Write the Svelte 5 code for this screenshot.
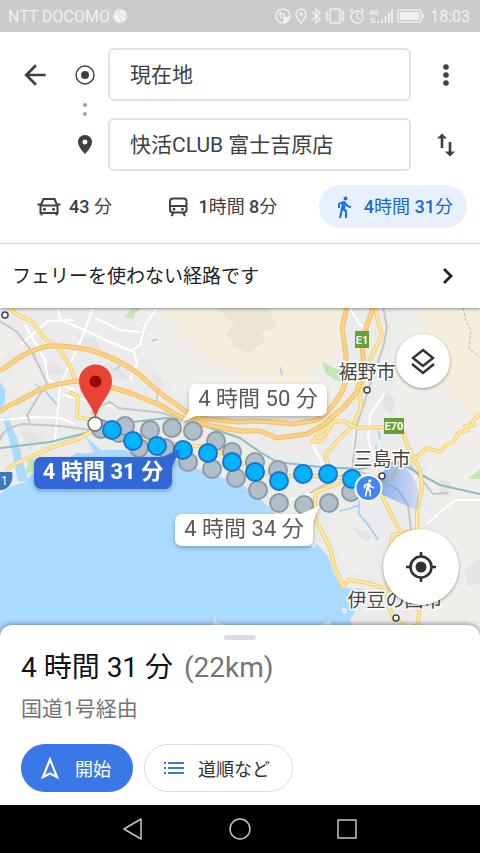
<script>
	let origin = '現在地';
	let destination = '快活CLUB 富士吉原店';
	let mode = 'walk';

	const modes = [
		{ id: 'car', label: '車', time: '43 分' },
		{ id: 'transit', label: '公共交通機関', time: '1時間 8分' },
		{ id: 'walk', label: '徒歩', time: '4時間 31分' }
	];

	// alternative routes
	const alternatives = [
		[101, 429], [119, 433], [125, 426], [139, 448], [150, 430], [165, 448], [172, 428], [193, 431],
		[216, 441], [232, 452], [255, 462], [278, 470], [188, 462], [212, 469], [236, 478], [258, 490],
		[279, 503], [304, 505], [329, 503], [351, 492]
	];

	// selected route
	const route = [
		[112, 430], [133, 441], [157, 446], [183, 450], [208, 453], [232, 462],
		[255, 472], [279, 481], [303, 474], [328, 474], [352, 479]
	];

	const highways = [
		'M0 371 L20 357 Q38 347 50 346 T90 350 Q120 359 140 375 L160 393 L180 407 Q190 417 207 419 L240 422 L253 421 L273 422 L293 424 L317 420 Q328 413 333 405 Q344 392 345 382 L346 355 L342 328 L347 306',
		'M0 412 Q8 405 17 402 L37 391 Q55 383 80 381 L110 387 L133 394 L160 405 L180 417 L207 425 L240 431 L260 431 L277 438 L307 434 L323 425 L343 408 L357 392 L364 368 L362 342 L367 325 L374 306'
	];

	const roads = [
		'M8 306 L16 314 L33 322 L43 337 L60 350 L70 366 L75 380',
		'M70 392 L78 397 L77 417 L93 420',
		'M5 472 L13 465 L50 448 L80 438 L93 431 L130 436 L180 445 L210 447 L235 460 L278 478 L300 475 L352 479',
		'M375 306 L378 322 L382 335 L372 355 L363 378 L360 395 L361 408 L353 425 L340 438 L325 455 L330 470',
		'M330 425 L317 436 L312 442 L322 441 L333 422 L343 421 L357 428 L383 427 L403 432 L410 452 L420 470 L422 488 L417 512 L417 530 L393 535 L388 555 L387 602 L395 622',
		'M480 414 L472 422 L474 425 L465 426 L468 430 L458 433 L454 442 L446 445 L440 452 L427 448 L413 460 L400 466 L384 487',
		'M352 479 L315 492 L315 518 L330 548 L335 568 L343 587 L348 580 L368 583 L383 588',
		'M375 478 L383 498 L393 518 L403 535',
		'M420 600 L418 625 L408 628 L398 620'
	];

	const streets = [
		'M93 308 L85 330 L78 347 L60 385 L55 440',
		'M25 325 L45 360 L48 380 L75 390',
		'M58 308 L60 320 L84 330 L110 342 L134 352 L137 363 L130 380',
		'M157 308 L145 325 L140 345 L133 350',
		'M0 420 L35 417 L60 418 L75 424',
		'M62 395 L85 400 L120 408',
		'M20 345 L48 321 L74 320',
		'M95 318 L120 330 L140 332',
		'M312 442 L318 455 L326 470',
		'M385 393 L370 415 L368 440 L375 460',
		'M480 500 L455 500 L440 512 L427 524',
		'M350 308 L358 322 L367 332',
		'M290 500 L340 485 L365 472',
		'M355 425 L353 460 L350 470'
	];

	const callouts = [
		{ x: 189, y: 384, text: '4 時間 50 分', tail: 'M191 408 L182 422 L204 412Z' },
		{ x: 175, y: 514, text: '4 時間 34 分', tail: 'M296 516 L319 506 L311 528Z' },
		{ x: 34, y: 457, text: '4 時間 31 分', tail: 'M156 460 L180 449 L170 472Z', active: true }
	];

	// '4時間 31分' -> ['', '4', '時間 ', '31', '分'], digits at odd places
	const parts = (time) => time.split(/(\d+)/);
</script>

<div class="screen">
	<div class="status">
		<span>NTT DOCOMO</span>
		<svg class="ball" width="14" height="14" viewBox="0 0 14 14">
			<circle cx="7" cy="7" r="7" fill="currentColor" />
			<path d="M1 4 Q7 4 8 13 M5 1 Q7 7 14 8" fill="none" stroke="#cbcbcb" stroke-dasharray="2 1" />
		</svg>
		<div class="status-icons">
			<svg width="16" height="16" viewBox="0 0 16 16">
				<circle cx="8" cy="8" r="7" />
				<path d="M6 11V5L4 7M9 5v6l2-2" />
				<path d="M9 14Q9 10 14 9Q14 14 9 14Z" fill="currentColor" />
			</svg>
			<svg width="12" height="16" viewBox="0 0 12 16">
				<path d="M6 15C3 11 1 9 1 6a5 5 0 0 1 10 0C11 9 9 11 6 15Z" />
				<circle cx="6" cy="6" r="1" fill="currentColor" />
			</svg>
			<svg width="10" height="16" viewBox="0 0 10 16">
				<path d="M1 4l8 7-4 4V1l4 4-8 7" />
			</svg>
			<svg width="20" height="16" viewBox="0 0 20 16">
				<rect x="5" y="1" width="10" height="14" rx="1" />
				<path d="M3 3L1 5l2 2-2 2 2 2-2 2M17 3l2 2-2 2 2 2-2 2 2 2" />
			</svg>
			<svg width="16" height="16" viewBox="0 0 16 16">
				<circle cx="8" cy="9" r="6" />
				<path d="M8 5v4l3 2M1 4l3-3M15 4l-3-3" />
			</svg>
			<svg class="signal" width="24" height="16" viewBox="0 0 24 16">
				<text x="0" y="7">4G</text>
				<path d="M3 15v-5l-2 2M5 10v5l2-2" stroke-width="1" />
				<path d="M9.500 15v-2M13 15v-4M16.500 15V8M20 15V5M23 15V1" stroke-width="1.800" />
			</svg>
			<svg width="28" height="14" viewBox="0 0 28 14">
				<rect x="1" y="1" width="23" height="12" rx="1" />
				<rect x="3" y="3" width="19" height="8" fill="currentColor" stroke="none" />
				<path d="M26 5v4" stroke-width="2" />
			</svg>
		</div>
		<span class="clock">18:03</span>
	</div>

	<header>
		<div class="fields">
			<button aria-label="戻る">
				<svg width="32" height="32" viewBox="0 0 24 24">
					<path d="M20 11H7.8l5.6-5.6L12 4l-8 8 8 8 1.4-1.4L7.8 13H20z" fill="currentColor" />
				</svg>
			</button>
			<svg width="20" height="20" viewBox="0 0 20 20">
				<circle cx="10" cy="10" r="9" fill="none" stroke="currentColor" stroke-width="1.4" />
				<circle cx="10" cy="10" r="4" fill="currentColor" />
			</svg>
			<input type="text" aria-label="出発地" bind:value={origin} />
			<button aria-label="その他">
				<svg width="24" height="24" viewBox="0 0 24 24" fill="currentColor">
					<circle cx="12" cy="4" r="2.8" />
					<circle cx="12" cy="12" r="2.8" />
					<circle cx="12" cy="20" r="2.8" />
				</svg>
			</button>

			<svg class="dots" width="6" height="16" viewBox="0 0 6 16">
				<circle cx="3" cy="3" r="2" />
				<circle cx="3" cy="12" r="2" />
			</svg>

			<svg class="place" width="24" height="24" viewBox="0 0 24 24">
				<path
					fill-rule="evenodd"
					d="M12 2C8.13 2 5 5.13 5 9c0 5.25 7 12 7 12s7-6.75 7-12c0-3.87-3.13-7-7-7zm0 9.500a2.500 2.500 0 1 1 0-5 2.500 2.500 0 0 1 0 5z"
					fill="currentColor"
				/>
			</svg>
			<input type="text" aria-label="目的地" bind:value={destination} />
			<button aria-label="出発地と目的地を入れ替える">
				<svg width="24" height="24" viewBox="0 0 24 24">
					<path d="M8 15V3M16 9v12" fill="none" stroke="currentColor" stroke-width="2.6" />
					<path d="M3 5.500L8 .500l5 5zM11 18.500l5 5 5-5z" fill="currentColor" />
				</svg>
			</button>
		</div>

		<nav class="modes" aria-label="移動手段">
			{#each modes as m}
				<button
					class="mode"
					class:selected={mode === m.id}
					aria-label="{m.label} {m.time}"
					aria-pressed={mode === m.id}
					on:click={() => (mode = m.id)}
				>
					<svg width="24" height="24" viewBox="0 0 24 24">
						{#if m.id === 'car'}
							<path
								d="M3.500 19V11l3-7h11l3 7v8M3.500 10.500h17M3.500 18h17M.500 9.500h3M20.500 9.500h3M4.500 17.500v3M19.500 17.500v3"
								fill="none"
								stroke="currentColor"
								stroke-width="2"
							/>
							<circle cx="7.500" cy="14.200" r="1.500" fill="currentColor" />
							<circle cx="16.500" cy="14.200" r="1.500" fill="currentColor" />
						{:else if m.id === 'transit'}
							<rect x="4" y="3.500" width="16.500" height="14" rx="3" fill="none" stroke="currentColor" stroke-width="2" />
							<path d="M4 11h16M7.500 17.500l-2 3.500M17 17.500l2 3.500" fill="none" stroke="currentColor" stroke-width="2" />
							<circle cx="8" cy="14.200" r="1.400" fill="currentColor" />
							<circle cx="16.500" cy="14.200" r="1.400" fill="currentColor" />
						{:else}
							<path
								d="M13.500 5.500c1.100 0 2-.9 2-2s-.9-2-2-2-2 .9-2 2 .9 2 2 2zM9.800 8.900L7 23h2.100l1.800-8 2.100 2v6h2v-7.500l-2.100-2 .6-3C14.800 12 16.800 13 19 13v-2c-1.900 0-3.500-1-4.300-2.400l-1-1.600c-.4-.6-1-1-1.700-1-.3 0-.5.1-.8.1L6 8.300V13h2V9.600l1.800-.7"
								fill="currentColor"
							/>
						{/if}
					</svg>
					<span class="time">{#each parts(m.time) as part, i}{#if i % 2}<b>{part}</b>{:else}{part}{/if}{/each}</span>
				</button>
			{/each}
		</nav>
	</header>

	<button class="notice">
		<span>フェリーを使わない経路です</span>
		<svg width="16" height="20" viewBox="0 0 16 20">
			<path d="M4 3l7 7-7 7" fill="none" stroke="currentColor" stroke-width="2.8" />
		</svg>
	</button>

	<main>
		<svg class="map" viewBox="0 308 480 331" preserveAspectRatio="xMidYMid slice">
			<defs>
				<linearGradient id="beam" x1="0" y1="0" x2="1" y2="0">
					<stop offset="0" stop-color="#4285f4" stop-opacity=".7" />
					<stop offset="1" stop-color="#4285f4" stop-opacity=".15" />
				</linearGradient>
				<filter id="shadow" x="-10%" y="-20%" width="120%" height="160%">
					<feDropShadow dx="0" dy="2" stdDeviation="2" flood-opacity=".28" />
				</filter>
			</defs>

			<rect y="300" width="480" height="350" fill="#ebebec" />

			<!-- hills -->
			<path class="plain" d="M130 308L148 330 142 352 162 377 190 408 240 418 300 420 333 400 345 350 340 308Z" />
			<path class="plain" d="M0 325L15 337 22 345 0 358ZM0 385L30 360 43 380 20 395ZM395 308L480 308 480 639 400 639 440 560 430 500 425 450 398 420 390 350ZM340 500L372 530 380 577 347 570 328 530Z" />
			<path class="hill" d="M161 312L181 307 345 307 334 326 341 344 327 350 330 358 315 365 308 384 288 388 270 377 248 380 235 371 205 360 196 342 176 337 185 327Z" />
			<path class="hill" d="M418 308L480 308 480 414 460 406 450 390 430 386 420 365 426 340Z" />
			<path class="peak" d="M216 308L269 308 277 328 260 332 266 341 248 353 234 346 226 334 234 323Z" />
			<path class="shade" d="M75 332l22 8 6 15-17-5zM50 358l15 14-22 4zM100 365l19 1 11 15-22-3zM147 370l15 9-2 12zM384 390l12 9-4 15-9-5zM465 570l15-12v25l-13 4zM410 548l21 14-7 20-13-8zM349 526l24 8-6 8zM438 478l13 4-2 15-9-3zM20 430l25 5-16 16z" />
			<path class="wood" d="M124 317l8-9h8l-6 7v4zM322 362l14 7 6 1 5 14-12-4-9-6zM468 479l12-10v10zM29 459l5-1v13l-9 3z" />

			<!-- sea and rivers -->
			<path
				class="sea"
				d="M0 494L10 487 25 482 32 474 56 468 76 453 90 453 100 450 125 450 160 456 188 464 207 473 240 483 260 499 278 516 300 538 313 548 317 544 328 556 334 574 342 588 365 589 352 598 350 607 355 612 350 620 360 639 0 639Z"
			/>
			<path class="sea" d="M0 382L5 390 5 402 0 410ZM3 418L8 417 17 438 28 480 18 482 12 450ZM85 436l17 15-7 3zM345 307h10l-7 3z" />
			<path class="river" d="M35 384l12 9 11 13M114 370l10-7M152 341l6-2M359 500v14l10 12 9 14M339 511l10-2 10-4M380 439l-2-10M376 445l1 15M280 367l2 8M157 395v10" />
			<path class="isle" d="M212 625l4-10-1 7 14 4v8zM342 607l5 2-1 5-4-2zM320 625l9-4 3 4z" />

			{#each streets as d}
				<path class="street" {d} />
			{/each}

			<path class="rail" d="M0 321L17 332 32 352 47 383 27 415 30 423M0 440Q2 428 23 424L60 426 90 430M92 415L93 409 110 402 118 408 163 413 187 422M383 306L387 328 383 348 370 385 357 425 352 470 310 493M352 470L375 476 398 490 408 505 411 530M397 462L410 465 433 494 448 493" />
			<path class="boundary" d="M463 308l3 13 5 10-2 18 11 8" />
			<path class="train" d="M0 448L50 442 90 432 133 422 167 418 187 420 240 438 260 452 277 462 320 467 360 469 397 462 407 467 440 485 480 494" />

			{#each roads as d}
				<path class="road-edge" {d} />
				<path class="road" {d} />
			{/each}
			{#each highways as d}
				<path class="highway-edge" {d} />
				<path class="highway" {d} />
			{/each}

			<!-- road shields -->
			<g class="shield">
				<rect x="355" y="331" width="14" height="17" />
				<text x="362" y="344">E1</text>
				<rect x="384" y="418" width="20" height="16" />
				<text x="394" y="430">E70</text>
			</g>
			<path d="M-4 472h16q2 9-4 15-4 4-8 3z" fill="#3d78c4" />
			<text x="1" y="485" class="route-number">1</text>

			<path d="M368 488L395 459Q424 478 418 511Z" fill="url(#beam)" />

			<g class="town">
				<circle cx="5" cy="315" r="3" />
				<circle cx="367" cy="390" r="3" />
				<circle cx="382" cy="476" r="3" />
				<circle cx="396" cy="618" r="3" />
				<text x="367" y="379">裾野市</text>
				<text x="382" y="466">三島市</text>
				<text x="395" y="607">伊豆の国市</text>
			</g>

			{#each alternatives as [cx, cy]}
				<circle class="alternative" {cx} {cy} r="9" />
			{/each}
			{#each route as [cx, cy]}
				<circle class="route" {cx} {cy} r="9" />
			{/each}

			<circle cx="95" cy="424" r="7" fill="#fff" stroke="#666" stroke-width="1.500" />
			<path d="M95.500 420C94 405 79 395 79 381a16.500 16.500 0 0 1 33 0C112 395 97 405 95.500 420Z" fill="#ea4335" />
			<circle cx="95.500" cy="381.500" r="6" fill="#960a0a" />

			<circle cx="368.500" cy="488" r="13" fill="#4285f4" stroke="#fff" stroke-width="2" />
			<path
				transform="translate(359 478) scale(.8)"
				d="M13.500 5.500c1.100 0 2-.9 2-2s-.9-2-2-2-2 .9-2 2 .9 2 2 2zM9.800 8.900L7 23h2.100l1.800-8 2.100 2v6h2v-7.500l-2.100-2 .6-3C14.800 12 16.800 13 19 13v-2c-1.900 0-3.500-1-4.300-2.400l-1-1.600c-.4-.6-1-1-1.700-1-.3 0-.5.1-.8.1L6 8.300V13h2V9.600l1.800-.7"
				fill="#fff"
			/>

			{#each callouts as c}
				<g class="callout" class:active={c.active} filter="url(#shadow)">
					<rect x={c.x} y={c.y} width="138" height="32" rx="7" />
					<path d={c.tail} />
					<text x={c.x + 69} y={c.y + 22}>{c.text}</text>
				</g>
			{/each}
		</svg>

		<button class="round layers" aria-label="レイヤ">
			<svg width="28" height="28" viewBox="0 0 28 28" fill="none" stroke="currentColor" stroke-width="2.400">
				<path d="M14 3l10 8-10 8-10-8zM3 17l11 9 11-9" />
			</svg>
		</button>
		<button class="round locate" aria-label="現在地を表示">
			<svg width="32" height="32" viewBox="0 0 32 32">
				<circle cx="16" cy="16" r="10.500" fill="none" stroke="currentColor" stroke-width="2.600" />
				<circle cx="16" cy="16" r="5.500" fill="currentColor" />
				<path d="M16 1v5M16 26v5M1 16h5M26 16h5" stroke="currentColor" stroke-width="2.600" />
			</svg>
		</button>
	</main>

	<section class="sheet">
		<div class="handle"></div>
		<h1>4 時間 31 分 <span>(22km)</span></h1>
		<p>国道1号経由</p>
		<div class="actions">
			<button class="start">
				<svg width="24" height="24" viewBox="0 0 24 24">
					<path d="M12 3.500L19 21l-7-3.500L5 21z" fill="none" stroke="currentColor" stroke-width="2.200" />
				</svg>
				開始
			</button>
			<button class="steps">
				<svg width="22" height="16" viewBox="0 0 22 16">
					<path d="M5 3h16M5 8h16M5 13h16M1 3h2M1 8h2M1 13h2" stroke="#3b78e7" stroke-width="2" />
				</svg>
				道順など
			</button>
		</div>
	</section>

	<nav class="system" aria-label="システム">
		<button aria-label="戻る">
			<svg width="24" height="24" viewBox="0 0 24 24">
				<path d="M20 2v20L3 12z" />
			</svg>
		</button>
		<button aria-label="ホーム">
			<svg width="24" height="24" viewBox="0 0 24 24">
				<circle cx="12" cy="12" r="10" />
			</svg>
		</button>
		<button aria-label="アプリ履歴">
			<svg width="24" height="24" viewBox="0 0 24 24">
				<rect x="3" y="3" width="18" height="18" />
			</svg>
		</button>
	</nav>
</div>

<style>
	:global(body) {
		margin: 0;
		background: #fff;
	}
	.screen {
		display: flex;
		flex-direction: column;
		min-height: 100vh;
		font-family: Roboto, 'Noto Sans CJK JP', sans-serif;
		color: #3c4043;
	}
	button {
		display: flex;
		align-items: center;
		justify-content: center;
		padding: 0;
		border: none;
		background: none;
		font: inherit;
		color: inherit;
		white-space: nowrap;
		cursor: pointer;
	}
	svg {
		flex: none;
	}

	.status {
		display: flex;
		align-items: center;
		height: 32px;
		padding: 0 10px 0 8px;
		background: #cbcbcb;
		color: #f0f0f0;
		font-size: 16px;
	}
	.ball {
		margin-left: 3px;
	}
	.status-icons {
		display: flex;
		align-items: center;
		gap: 4px;
		margin-left: auto;
	}
	.status-icons svg {
		fill: none;
		stroke: currentColor;
		stroke-width: 1.4;
	}
	.signal text {
		fill: currentColor;
		stroke: none;
		font-size: 8px;
		font-weight: 700;
	}
	.clock {
		margin-left: 5px;
	}

	header {
		padding: 16px 0 15px;
		border-bottom: 1px solid #e6e7e9;
	}
	.fields {
		display: grid;
		grid-template-columns: 70px 30px 1fr 69px;
		grid-template-rows: 53px 17px 53px;
		align-items: center;
		justify-items: center;
	}
	.fields button {
		width: 48px;
		height: 48px;
	}
	.fields input {
		box-sizing: border-box;
		justify-self: stretch;
		min-width: 0;
		height: 53px;
		margin-left: 8px;
		padding: 0 20px 3px;
		border: 2px solid #e1e2e9;
		border-radius: 6px;
		background: #fff;
		font: inherit;
		font-size: 21px;
		color: #3c4043;
	}
	.dots {
		grid-column: 2;
		fill: #9aa0a6;
	}
	.place {
		grid-column: 2;
	}

	.modes {
		display: flex;
		justify-content: space-between;
		margin-top: 14px;
		padding: 0 13px 0 24px;
	}
	.mode {
		gap: 8px;
		height: 43px;
		padding: 0 14px 0 13px;
		border-radius: 22px;
		font-size: 18px;
	}
	.time {
		padding-bottom: 3px;
	}
	.time b {
		font-weight: 500;
	}
	.mode.selected {
		background: #e8f0fe;
		color: #1967d2;
	}
	.mode.selected svg {
		color: #1a73e8;
	}

	.notice {
		position: relative;
		z-index: 1;
		justify-content: space-between;
		height: 64px;
		padding: 0 24px 0 12px;
		background: #fff;
		box-shadow: 0 1px 3px rgba(0, 0, 0, 0.4);
		font-size: 19px;
		color: #202124;
	}
	.notice span {
		padding-bottom: 3px;
	}

	main {
		position: relative;
		flex: 1;
		min-height: 320px;
	}
	.map {
		position: absolute;
		inset: 0;
		width: 100%;
		height: 100%;
	}
	.map path {
		stroke-linejoin: round;
	}
	.plain {
		fill: #efeeeb;
	}
	.hill {
		fill: #f5eedc;
	}
	.peak {
		fill: #ece5d3;
	}
	.shade {
		fill: #e4e4e5;
	}
	.wood {
		fill: #c3e8b5;
	}
	.sea {
		fill: #aadaff;
	}
	.isle {
		fill: #ebebeb;
	}
	.river,
	.street,
	.rail,
	.boundary,
	.train,
	.road,
	.road-edge,
	.highway,
	.highway-edge {
		fill: none;
	}
	.river {
		stroke: #9bd0f8;
		stroke-width: 1.5;
	}
	.street {
		stroke: #fff;
		stroke-width: 2;
	}
	.rail {
		stroke: #c4c6c9;
		stroke-width: 2;
	}
	.boundary {
		stroke: #b5b5b5;
		stroke-dasharray: 3 2;
	}
	.train {
		stroke: #8fbcc0;
		stroke-width: 2;
	}
	.road-edge {
		stroke: #f0d078;
		stroke-width: 4;
	}
	.road {
		stroke: #ffeaa0;
		stroke-width: 2;
	}
	.highway-edge {
		stroke: #f3bf66;
		stroke-width: 5;
	}
	.highway {
		stroke: #fcd384;
		stroke-width: 3;
	}
	.shield rect {
		fill: #689f38;
	}
	.shield text {
		fill: #fff;
		font-size: 11px;
		font-weight: 700;
		text-anchor: middle;
	}
	.route-number {
		fill: #fff;
		font-size: 12px;
	}
	.town circle {
		fill: #fff;
		stroke: #444;
		stroke-width: 1.5;
	}
	.town text {
		fill: #444;
		stroke: #fff;
		stroke-width: 3;
		paint-order: stroke;
		font-size: 19px;
		text-anchor: middle;
	}
	.alternative {
		fill: #afbfc8;
		stroke: #8f98a3;
		stroke-width: 2;
	}
	.route {
		fill: #00b3fd;
		stroke: #1f71cf;
		stroke-width: 2;
	}
	.callout {
		fill: #fff;
	}
	.callout text {
		fill: #5a5a5a;
		font-size: 22px;
		text-anchor: middle;
	}
	.callout.active {
		fill: #3367d6;
	}
	.callout.active text {
		fill: #fff;
		font-weight: 700;
	}

	.round {
		position: absolute;
		border-radius: 50%;
		background: #fff;
		box-shadow: 0 1px 3px rgba(0, 0, 0, 0.4);
		color: #303134;
	}
	.layers {
		top: 26px;
		right: 30px;
		width: 54px;
		height: 54px;
	}
	.locate {
		right: 21px;
		bottom: 34px;
		width: 76px;
		height: 76px;
	}

	.sheet {
		position: relative;
		margin-top: -14px;
		padding: 10px 21px 13px;
		border-radius: 12px 12px 0 0;
		background: #fff;
		box-shadow: 0 -1px 5px rgba(0, 0, 0, 0.4);
	}
	.handle {
		width: 32px;
		height: 5px;
		margin: 0 auto;
		border-radius: 3px;
		background: #dadce0;
	}
	h1 {
		margin: 8px 0 0;
		font-size: 28px;
		line-height: 40px;
		font-weight: 400;
		color: #111;
	}
	h1 span {
		margin-left: 4px;
		color: #757575;
	}
	p {
		margin: 5px 0 0;
		font-size: 21px;
		line-height: 32px;
		color: #757575;
	}
	.actions {
		display: flex;
		gap: 11px;
		margin-top: 19px;
	}
	.actions button {
		box-sizing: border-box;
		height: 48px;
		border-radius: 24px;
		font-size: 18px;
	}
	.actions .start {
		gap: 13px;
		padding: 0 22px 0 17px;
		background: #3b78e7;
		color: #fff;
	}
	.actions .steps {
		gap: 13px;
		padding: 0 22px 0 18px;
		border: 1px solid #dadce0;
		color: #303134;
	}

	.system {
		display: flex;
		justify-content: center;
		gap: 59px;
		height: 48px;
		background: #000;
	}
	.system button {
		width: 48px;
	}
	.system svg {
		fill: none;
		stroke: #c4c4c4;
		stroke-width: 1.5;
		stroke-linejoin: round;
	}
</style>
